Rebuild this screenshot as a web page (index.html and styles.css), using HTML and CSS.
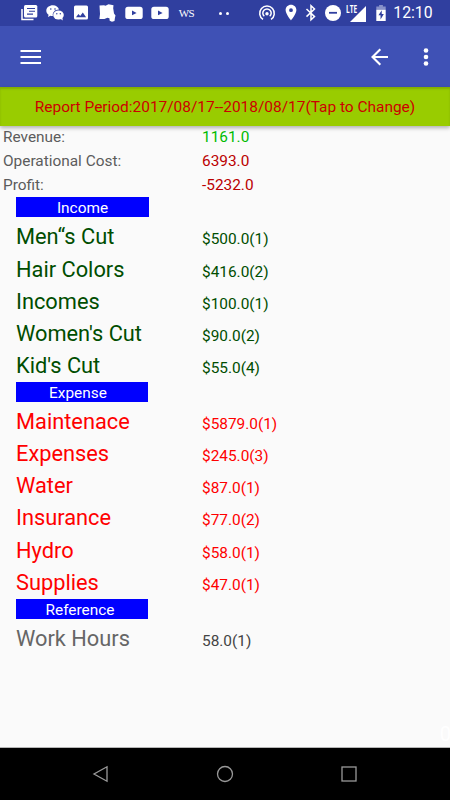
FILE: index.html
```html
<!DOCTYPE html>
<html lang="en">
<head>
    <meta charset="UTF-8">
    <meta name="viewport" content="width=device-width, initial-scale=1.0">
    <title>Report</title>
    <link rel="stylesheet" href="styles.css">
</head>
<body>

    <div class="screen">
        <!-- Status Bar -->
        <div class="status-bar">
            <div class="notifications">
                <svg viewBox="0 0 18 18"><path d="M2 5v10.5h11.5" fill="none" stroke="#fff" stroke-width="1.5"/><rect x="4" y="1" width="13.3" height="12.5" rx="1.5"/><path d="M7 4.5h8M9 7.3h6M7 10.1h6" stroke="#303f9f" stroke-width="1.1"/></svg>
                <svg viewBox="0 0 18 18"><path d="M7 1.3C3.200 1.300.300 3.600.300 6.700c0 1.700.9 3.100 2.300 4.100L2 13l2.400-1.200c.8.200 1.600.3 2.500.2-.8-3.600 2-6.600 6.100-6.500C12.300 3.100 9.900 1.300 7 1.300z"/><ellipse cx="12.500" cy="11" rx="5.300" ry="4.500"/><path d="M14 14.500l2.800 2-.5-3z"/><g fill="#303f9f"><circle cx="4.800" cy="5" r=".8"/><circle cx="9" cy="5" r=".8"/><circle cx="10.800" cy="9.700" r=".7"/><circle cx="14.300" cy="9.700" r=".7"/></g></svg>
                <svg viewBox="0 0 18 18"><rect x="2" y="1.500" width="14" height="14" rx="1.500"/><path d="M4 13.300l2.400-3.200 1.800 2 2.600-3.500 3.300 4.700z" fill="#303f9f"/></svg>
                <svg viewBox="0 0 18 18"><path d="M1.500 1.500L6 1.200l1.500.5L10.500.3l5 1-.3 3 .8 5.200 1.500 2-.5 2-.5 3.500-2.500.8-2.300-1-.3-2.600-2-.4-3 1.200-5 .1.600-5.200z"/></svg>
                <svg viewBox="0 0 18 18"><rect x=".3" y="2.700" width="17.400" height="12.400" rx="2.700"/><path d="M7 6.500v4.800l4.600-2.400z" fill="#303f9f"/></svg>
                <svg viewBox="0 0 18 18"><rect x=".3" y="2.700" width="17.400" height="12.400" rx="2.700"/><path d="M7 6.500v4.800l4.600-2.400z" fill="#303f9f"/></svg>
                <span class="ws">WS</span>
            </div>
            <div class="more-dots"><i></i><i></i></div>
            <div class="system-icons">
                <svg class="hotspot" viewBox="0 0 18 18"><g fill="none" stroke="#fff" stroke-width="1.500"><path d="M5 15.400a7.300 7.300 0 1 1 8 0"/><path d="M6.300 12.300a4.200 4.200 0 1 1 5.400 0"/></g><circle cx="9" cy="9.800" r="1.700"/></svg>
                <svg class="pin" viewBox="0 0 12 18"><path d="M6 .8C2.900.8.600 3.100.600 6.100.600 10 6 16.500 6 16.500s5.400-6.500 5.400-10.400C11.400 3.100 9.100.8 6 .8zm0 3.500a1.900 1.900 0 1 1 0 3.800 1.900 1.900 0 0 1 0-3.800z" fill-rule="evenodd"/></svg>
                <svg class="bluetooth" viewBox="0 0 12 18"><path d="M1.500 5l8 7.600L6 15.800V1.800L9.500 5l-8 7.600" fill="none" stroke="#fff" stroke-width="1.500"/></svg>
                <svg class="dnd" viewBox="0 0 18 18"><circle cx="9" cy="9" r="8"/><path d="M5 8.800h8" stroke="#303f9f" stroke-width="1.800"/></svg>
                <div class="signal"><span>LTE</span><svg viewBox="0 0 16 16"><path d="M16 0v16H0z"/></svg></div>
                <svg class="battery" viewBox="0 0 10 17"><path d="M3 0h4v1.700h3V5H0V1.700h3z" fill="#8791c9"/><path d="M0 5h10v12H0z"/><path d="M5.800 5.500L2.300 11h2.200v4.300L8 9.500H5.800z" fill="#303f9f"/></svg>
            </div>
            <span class="clock">12:10</span>
        </div>

        <!-- Toolbar -->
        <div class="toolbar">
            <svg class="menu-icon" viewBox="0 0 22 16"><path d="M.500 2h20.500M.500 8h20.500M.500 14h20.500"/></svg>
            <svg class="back-icon" viewBox="0 0 20 18"><path d="M18 9H2.500M10.300 1.200L2.500 9l7.800 7.800"/></svg>
            <svg class="overflow-icon" viewBox="0 0 6 20"><circle cx="3" cy="3.500" r="2.300"/><circle cx="3" cy="10" r="2.300"/><circle cx="3" cy="16.500" r="2.300"/></svg>
        </div>

        <div class="period">Report Period:2017/08/17--2018/08/17(Tap to Change)</div>

        <!-- Report -->
        <div class="report">
            <div class="total"><span>Revenue:</span><span class="profit">1161.0</span></div>
            <div class="total"><span>Operational Cost:</span><span class="loss">6393.0</span></div>
            <div class="total"><span>Profit:</span><span class="loss">-5232.0</span></div>

            <h2 class="section-title wide">Income</h2>
            <div class="income">
                <div class="item"><span>Men“s Cut</span><span class="amount">$500.0(1)</span></div>
                <div class="item"><span>Hair Colors</span><span class="amount">$416.0(2)</span></div>
                <div class="item"><span>Incomes</span><span class="amount">$100.0(1)</span></div>
                <div class="item"><span>Women's Cut</span><span class="amount">$90.0(2)</span></div>
                <div class="item"><span>Kid's Cut</span><span class="amount">$55.0(4)</span></div>
            </div>

            <h2 class="section-title">Expense</h2>
            <div class="expense">
                <div class="item"><span>Maintenace</span><span class="amount">$5879.0(1)</span></div>
                <div class="item"><span>Expenses</span><span class="amount">$245.0(3)</span></div>
                <div class="item"><span>Water</span><span class="amount">$87.0(1)</span></div>
                <div class="item"><span>Insurance</span><span class="amount">$77.0(2)</span></div>
                <div class="item"><span>Hydro</span><span class="amount">$58.0(1)</span></div>
                <div class="item"><span>Supplies</span><span class="amount">$47.0(1)</span></div>
            </div>

            <h2 class="section-title last">Reference</h2>
            <div class="reference">
                <div class="item"><span>Work Hours</span><span class="amount">58.0(1)</span></div>
            </div>
            <span class="count">0</span>
        </div>

        <!-- Navigation Bar -->
        <div class="nav-bar">
            <svg viewBox="0 0 18 18"><path d="M15 1.800v14.400L2 9z"/></svg>
            <svg viewBox="0 0 18 18"><circle cx="9" cy="9" r="7.500"/></svg>
            <svg viewBox="0 0 18 18"><rect x="2" y="2" width="14" height="14"/></svg>
        </div>
    </div>

</body>
</html>
```
FILE: styles.css
```css
* {
    box-sizing: border-box;
    margin: 0;
    padding: 0;
}

body {
    font-family: Roboto, sans-serif;
    background: #fafafa;
}

svg {
    display: block;
    flex-shrink: 0;
}

.screen {
    width: 450px;
    height: 800px;
    display: flex;
    flex-direction: column;
    overflow: hidden;
}

/* Status Bar */
.status-bar {
    height: 26px;
    flex-shrink: 0;
    display: flex;
    align-items: center;
    padding-left: 15px;
    background: #303f9f;
    color: #fff;
}

.status-bar svg {
    fill: #fff;
}

.notifications {
    display: flex;
    align-items: center;
    gap: 8.3px;
    padding-left: 4.5px;
}

.notifications svg {
    width: 18px;
    height: 18px;
}

.ws {
    width: 18px;
    font-family: "Liberation Serif", serif;
    font-size: 11px;
    letter-spacing: -0.8px;
    text-align: center;
}

.more-dots {
    display: flex;
    gap: 4px;
    margin-left: 24px;
}

.more-dots i {
    width: 3px;
    height: 3px;
    border-radius: 50%;
    background: #fff;
}

.system-icons {
    display: flex;
    align-items: center;
    margin-left: 28.5px;
}

.hotspot {
    width: 18px;
    height: 18px;
}

.pin {
    width: 12px;
    height: 18px;
    margin-left: 9px;
}

.bluetooth {
    width: 12px;
    height: 18px;
    margin-left: 8px;
}

.dnd {
    width: 18px;
    height: 18px;
    margin-left: 7px;
}

.signal {
    display: flex;
    height: 17px;
    margin-left: 4px;
}

.signal span {
    width: 4px;
    font: bold 10.5px/9px "Open Sans", sans-serif;
    transform: scaleX(0.62);
    transform-origin: 0 0;
}

.signal svg {
    width: 16px;
    height: 16px;
    margin-top: 1px;
}

.battery {
    width: 10px;
    height: 16px;
    margin-left: 10px;
}

.clock {
    margin-left: 7.5px;
    font-size: 15.8px;
    line-height: 28px;
}

/* Toolbar */
.toolbar {
    height: 61px;
    flex-shrink: 0;
    display: flex;
    align-items: center;
    padding: 0 21px 0 20px;
    background: #3f51b5;
}

.menu-icon {
    width: 22px;
    height: 16px;
    margin-right: auto;
    fill: none;
    stroke: #fff;
    stroke-width: 2.1;
}

.back-icon {
    width: 20px;
    height: 18px;
    margin-right: 33px;
    fill: none;
    stroke: #fff;
    stroke-width: 2.1;
}

.overflow-icon {
    width: 6px;
    height: 20px;
    fill: #fff;
}

.period {
    height: 39px;
    flex-shrink: 0;
    background: #99cc00;
    color: #cc0000;
    font-size: 15.45px;
    line-height: 41px;
    text-align: center;
    white-space: nowrap;
    box-shadow: 0 2px 4px rgba(0, 0, 0, 0.3), inset 0 2px 2px rgba(0, 0, 0, 0.15);
}

/* Report */
.report {
    flex: 1;
    display: flex;
    flex-direction: column;
    border-bottom: 1px solid #b5b5b5;
}

.total {
    display: grid;
    grid-template-columns: 199px 1fr;
    height: 23.8px;
    padding-left: 3px;
    font-size: 15.4px;
    line-height: 23px;
    color: #5c5c5c;
}

.profit {
    color: #00bb00;
}

.loss {
    color: #bb0000;
}

.section-title {
    width: 132px;
    height: 20px;
    margin-left: 16px;
    padding-right: 8px;
    background: #0000ff;
    color: #fff;
    font-size: 15.4px;
    font-weight: normal;
    line-height: 22px;
    text-align: center;
}

.section-title.wide {
    width: 133px;
    padding-right: 0;
}

.section-title.last {
    padding-right: 4px;
}

.item {
    display: grid;
    grid-template-columns: 186px 1fr;
    align-items: baseline;
    height: 32.2px;
    padding-left: 16px;
    font-size: 21.8px;
    line-height: 40px;
}

.amount {
    font-size: 15.4px;
}

.income {
    color: #004d00;
    height: 164.5px;
}

.expense {
    color: #ff0000;
    height: 197px;
}

.reference {
    color: #666;
}

.reference .amount {
    color: #444;
}

.count {
    margin: auto -1px 1px auto;
    color: #fff;
    font-size: 20px;
}

/* Navigation Bar */
.nav-bar {
    height: 52px;
    flex-shrink: 0;
    display: flex;
    justify-content: space-between;
    align-items: center;
    padding: 0 92px;
    background: #000;
}

.nav-bar svg {
    width: 18px;
    height: 18px;
    fill: none;
    stroke: #999;
    stroke-width: 1.3;
}
```
